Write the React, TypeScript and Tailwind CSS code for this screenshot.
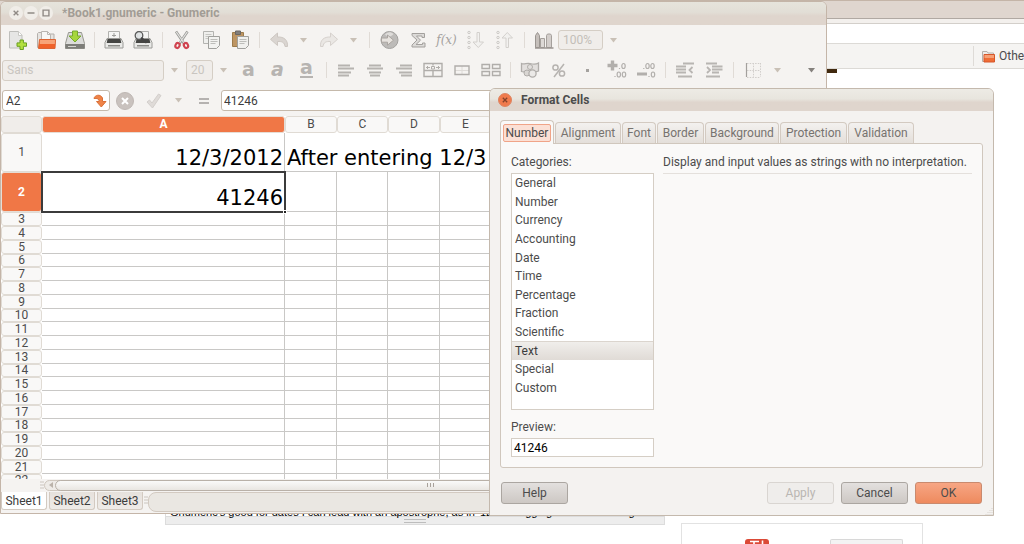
import type { ReactNode } from "react";

const toolIcon = "h-5 w-5";

function ToolButton({ label, children }: { label: string; children: ReactNode }) {
  return (
    <button type="button" aria-label={label} title={label} className="flex h-7 w-[29px] shrink-0 items-center justify-center">
      {children}
    </button>
  );
}

function Separator() {
  return (
    <div className="flex w-[10px] shrink-0 justify-center">
      <div className="h-4 w-px bg-[#e0dbd6]" />
    </div>
  );
}

function DropArrow({ label, dark = false }: { label: string; dark?: boolean }) {
  return (
    <button type="button" aria-label={label} className="flex h-7 w-[21px] shrink-0 items-center justify-center">
      <svg viewBox="0 0 7 5" className="h-[5px] w-[7px]">
        <path d="M0 0h7L3.5 4.6z" fill={dark ? "#85817d" : "#c9c0b6"} />
      </svg>
    </button>
  );
}

function NewIcon() {
  return (
    <svg viewBox="0 0 20 20" className={toolIcon}>
      <path d="M2.500 1.500h9l3.500 3.500v13H2.500z" fill="#e6e6e5" stroke="#bebebb" />
      <path d="M11.500 1.500v4H15" fill="#fff" stroke="#c9c9c5" />
      <path d="M13 10h3.400v2.900h3.100v3.400h-3.100v3.200H13v-3.200h-3v-3.400h3z" fill="#b3e03f" stroke="#6a9f22" />
    </svg>
  );
}

function FolderIcon() {
  return (
    <svg viewBox="0 0 20 20" className={toolIcon}>
      <path d="M1.500 17.500v-14l1-1H7l1 1.500h10v13.500z" fill="#e6e4e1" stroke="#b4b0ac" />
      <path d="M5.500 9V1.500h6l3 3V9" fill="#f7f7f6" stroke="#b9b6b2" />
      <path d="M11.500 1.500v3h3" fill="none" stroke="#b9b6b2" />
      <path d="M3.500 9.500h16l-.5 9H2.500z" fill="#f0622a" stroke="#dc6534" />
      <path d="M4 10h15l-.2 4H3.800z" fill="#f8a478" />
    </svg>
  );
}

function SaveIcon() {
  return (
    <svg viewBox="0 0 20 20" className={toolIcon}>
      <path d="M3.500 2.500h13l3 11v5H.500v-5z" fill="#dcdcda" stroke="#96968f" />
      <path d="M.5 14h19v4.500H.5z" fill="#7d7d79" />
      <path d="M3 16.500h8" stroke="#d5d5d0" />
      <path d="M7.500 1h5v5H16l-6 6-6-6h3.500z" fill="#a6d63c" stroke="#76aa2c" />
    </svg>
  );
}

function PrinterIcon({ preview = false }: { preview?: boolean }) {
  return (
    <svg viewBox="0 0 20 20" className={toolIcon}>
      <path d="M4.500 1.500h11V11h-11z" fill="#f5f5f4" stroke="#b1b1ae" />
      <path d="M3 8.500h14l2 4v5.500H1v-5.500z" fill="#e9e9e7" stroke="#9a9a97" />
      <path d="M3.500 9h13l.8 4H2.700z" fill="#454543" />
      <path d="M4 15h12v1.500H4z" fill="#8b8b88" />
      {preview ? (
        <>
          <circle cx="6" cy="5.500" r="3.800" fill="#dfe2e3" fillOpacity="0.9" stroke="#5b5b5b" strokeWidth="1.300" />
          <path d="M8.800 8.300l4 3.900" stroke="#444" strokeWidth="2.200" strokeLinecap="round" />
        </>
      ) : (
        <path d="M10 3v4M8 5.500h4" stroke="#9d9d9a" />
      )}
    </svg>
  );
}

function CutIcon() {
  return (
    <svg viewBox="0 0 20 20" className={toolIcon}>
      <path d="M4 1.500l8 12M15.500 1.500l-8 12" stroke="#989895" strokeWidth="2.600" />
      <path d="M4.300 2l7.700 11M15.200 2l-7.700 11" stroke="#e4e4e2" strokeWidth="1.200" />
      <ellipse cx="5.500" cy="15.500" rx="2" ry="2.600" transform="rotate(25 5.500 15.500)" fill="none" stroke="#d04450" strokeWidth="2.200" />
      <ellipse cx="14" cy="15.500" rx="2" ry="2.600" transform="rotate(-25 14 15.500)" fill="none" stroke="#d04450" strokeWidth="2.200" />
    </svg>
  );
}

function CopyIcon() {
  return (
    <svg viewBox="0 0 20 20" className={toolIcon}>
      <path d="M2.500 1.500h10v12h-10z" fill="#efefed" stroke="#b3b3b0" />
      <path d="M4.500 4.500h6M4.500 6.500h3M4.500 8.500h3" stroke="#c6c6c3" />
      <path d="M7.500 6.500h11v9l-3 3h-8z" fill="#f2f2f0" stroke="#a0a09d" />
      <path d="M9.500 9.500h7M9.500 11.500h7M9.500 13.500h5" stroke="#bdbdba" />
    </svg>
  );
}

function PasteIcon() {
  return (
    <svg viewBox="0 0 20 20" className={toolIcon}>
      <path d="M2.500 2.500h11v14h-11z" fill="#bd9563" stroke="#9c7b4b" />
      <path d="M5.500 1h5v3.500h-5z" fill="#807d7a" stroke="#6a6764" />
      <path d="M7.500 6.500h11v9l-3 3h-8z" fill="#f0f0ee" stroke="#a0a09d" />
      <path d="M9.500 9.500h7M9.500 11.500h7M9.500 13.500h5" stroke="#bdbdba" />
    </svg>
  );
}

function UndoIcon({ redo = false }: { redo?: boolean }) {
  return (
    <svg viewBox="0 0 20 20" className={toolIcon}>
      <path
        d="M8.500 3L1.500 9.300l7 6.200v-4c4.500-.3 7 .8 7.500 5h2.500c.5-6.500-3.500-9.800-10-9.500z"
        fill={redo ? "#eae7e4" : "#dad5d1"}
        stroke={redo ? "#d6d1cd" : "#cdc7c2"}
        transform={redo ? "matrix(-1 0 0 1 20 0)" : undefined}
      />
    </svg>
  );
}

function LinkIcon() {
  return (
    <svg viewBox="0 0 20 20" className={toolIcon}>
      <circle cx="10.500" cy="10" r="8.500" fill="#bdbbb9" stroke="#a3a19f" />
      <path d="M6 4.500c3-3 6-3 8.500-.5-2 2.500-5 4-8.500.5z" fill="#dedcda" />
      <path d="M2.500 8h6V5l6 5.200-6 5v-3h-6z" fill="#e7e3df" stroke="#aaa5a1" />
    </svg>
  );
}

function SumIcon() {
  return (
    <svg viewBox="0 0 20 20" className={toolIcon}>
      <path d="M4 3.500h12.500v4H14V6H8.500l4 4.200L8 14.500h6.500V13H17v4H4v-2l5-5-5-4.500z" fill="#dcdad8" stroke="#a3a09d" />
    </svg>
  );
}

function SortIcon({ up = false }: { up?: boolean }) {
  return (
    <svg viewBox="0 0 20 20" className={toolIcon} fill="none" stroke="#cbc8c5">
      <circle cx="3" cy="2.500" r="1.200" />
      <circle cx="3" cy="7.500" r="1.200" />
      <circle cx="3" cy="12.500" r="1.200" />
      <circle cx="3" cy="17.500" r="1.200" />
      <path
        d="M11 2.500h2.500v9.500h4L12.300 17.500 7 12h4z"
        fill="#f2f1ef"
        stroke="#d3d0cd"
        transform={up ? "matrix(1 0 0 -1 0 20)" : undefined}
      />
    </svg>
  );
}

function ChartIcon() {
  return (
    <svg viewBox="0 0 20 20" className={toolIcon}>
      <path d="M1.500 5.500l2-3 2 3v12h-4z" fill="#c5bfbb" stroke="#9a9591" />
      <path d="M6.500 8.500h4v9h-4z" fill="#ddd9d6" stroke="#a5a09c" />
      <path d="M12.500 5.500l1-1.500h3l1 1.500v12h-5z" fill="#d3cecb" stroke="#a5a09c" />
      <path d="M1 18h18.500" stroke="#9a9591" strokeWidth="1.600" />
    </svg>
  );
}

function LetterIcon({ kind }: { kind: "bold" | "italic" | "underline" }) {
  const style = {
    bold: "font-bold",
    italic: "font-bold italic",
    underline: "font-bold border-b-2 border-[#b7b4b1]",
  }[kind];
  return <span className={`flex h-4 items-end font-[DejaVu_Sans,sans-serif] text-[19px] leading-[17px] text-[#b7b4b1] ${style}`}>a</span>;
}

function AlignIcon({ align }: { align: "left" | "center" | "right" }) {
  const d = {
    left: "M2 5.500h12M2 8.500h16M2 12.500h13M2 15.500h11",
    center: "M4 5.500h12M2 8.500h16M4 12.500h12M5 15.500h10",
    right: "M6 5.500h12M2 8.500h16M5 12.500h13M7 15.500h11",
  }[align];
  return (
    <svg viewBox="0 0 20 20" className={toolIcon}>
      <path d={d} stroke="#b6b3b0" strokeWidth="2" />
    </svg>
  );
}

function CenterAcrossIcon() {
  return (
    <svg viewBox="0 0 20 20" className={toolIcon} fill="none" stroke="#b0adaa">
      <path d="M1 3.500h18v13H1zM1 10.500h18M10 10.500v6M10 3.500v2" strokeWidth="1.400" />
      <path d="M3 7.500h4M13 7.500h4M4.500 6v3M15.500 6v3M8.500 6.500h3v2.500h-3z" />
    </svg>
  );
}

function MergeIcon() {
  return (
    <svg viewBox="0 0 20 20" className={toolIcon} fill="none">
      <path d="M10 6v9M3 10.500h14" stroke="#dedbd8" />
      <path d="M3 6h14v8.500H3z" stroke="#b0adaa" strokeWidth="1.400" />
    </svg>
  );
}

function SplitIcon() {
  return (
    <svg viewBox="0 0 20 20" className={toolIcon} fill="none" stroke="#b0adaa" strokeWidth="1.400">
      <path d="M1 4.500h7.500v4H1zM11.500 4.500H19v4h-7.500zM1 11.500h7.500v4H1zM11.500 11.500H19v4h-7.500z" />
    </svg>
  );
}

function MoneyIcon() {
  return (
    <svg viewBox="0 0 20 20" className={toolIcon} stroke="#b0adaa">
      <path d="M1.500 3.500c3 1.500 5-1 8.500 0s6 1 8.500-.5v8c-3 1.500-5.500 1-8.500.5s-6 1-8.500 0z" fill="#e2dfdd" strokeWidth="1.300" />
      <circle cx="10" cy="7" r="2.500" fill="none" />
      <circle cx="7" cy="13" r="3" fill="#d9d6d3" />
      <circle cx="12.500" cy="13.500" r="3.600" fill="#ebe9e7" strokeWidth="1.300" />
    </svg>
  );
}

function PercentIcon() {
  return (
    <svg viewBox="0 0 20 20" className={toolIcon} fill="none" stroke="#b6b3b0" strokeWidth="1.500">
      <circle cx="6.500" cy="7.500" r="2.600" />
      <circle cx="13" cy="13.500" r="2.600" />
      <path d="M15 4L5 17" />
    </svg>
  );
}

function DecimalIcon({ add = false }: { add?: boolean }) {
  return (
    <svg viewBox="0 0 20 20" className={toolIcon} fill="none" stroke="#b2afac" strokeWidth="1.200">
      {add ? (
        <path d="M.5 5.500h10M5.500 .5v10" strokeWidth="3.400" />
      ) : (
        <path d="M1 14h10" strokeWidth="3" />
      )}
      <ellipse cx="16.500" cy="6" rx="1.700" ry="2.500" />
      {add ? <path d="M12.500 8v1" /> : <ellipse cx="11.500" cy="6" rx="1.700" ry="2.500" />}
      {!add && <path d="M7.800 8v1M13 16v1" />}
      <ellipse cx="17" cy="14.500" rx="1.700" ry="2.500" />
      {add && <ellipse cx="11.800" cy="14.500" rx="1.700" ry="2.500" />}
      {add && <path d="M8 16v1" />}
    </svg>
  );
}

function IndentIcon({ more = false }: { more?: boolean }) {
  return (
    <svg viewBox="0 0 20 20" className={toolIcon} fill="none" stroke="#b8b5b2" strokeWidth="1.800">
      {more ? (
        <path d="M2 3.500h11M8 6.500h10.500M8 9.500h10.500M8 12.500h7M2 16.500h14M3 7l3 3-3 3" />
      ) : (
        <path d="M8 3.500h11M1 6.500h10M1 9.500h10M1 12.500h10M3 16.500h14M17.500 7l-3 3 3 3" />
      )}
    </svg>
  );
}

function BordersIcon() {
  return (
    <svg viewBox="0 0 20 20" className={toolIcon} fill="none" stroke="#d0cdca">
      <path d="M3.500 3v14" stroke="#a3a09d" strokeWidth="1.200" />
      <path d="M4 3.500h13.500M4 10.500h13.500M4 17.500h13.500M10.500 3v14M17.500 3v14" strokeDasharray="1.500 1.200" />
    </svg>
  );
}

function FormulaIcon() {
  return <span className="font-[DejaVu_Serif,serif] text-[12px] italic leading-4 text-[#a5a29f]">f(x)</span>;
}

function GotoIcon() {
  return (
    <svg viewBox="0 0 14 14" className="h-[14px] w-[14px]">
      <path d="M1 4.500C1.500 1 7.500-.5 9.500 4v3.500H13L8.300 13 3.500 7.500h2.800C6.300 5 4 4 1 4.500z" fill="#ef8347" stroke="#d97039" />
    </svg>
  );
}

const boxed = "rounded-[3px] border px-1 text-[12px] leading-4";

function Toolbars() {
  return (
    <>
      <div role="toolbar" aria-label="Standard" className="flex h-[30px] items-center pl-px">
        <ToolButton label="New"><NewIcon /></ToolButton>
        <ToolButton label="Open"><FolderIcon /></ToolButton>
        <ToolButton label="Save"><SaveIcon /></ToolButton>
        <Separator />
        <ToolButton label="Print"><PrinterIcon /></ToolButton>
        <ToolButton label="Print preview"><PrinterIcon preview /></ToolButton>
        <Separator />
        <ToolButton label="Cut"><CutIcon /></ToolButton>
        <ToolButton label="Copy"><CopyIcon /></ToolButton>
        <ToolButton label="Paste"><PasteIcon /></ToolButton>
        <Separator />
        <ToolButton label="Undo"><UndoIcon /></ToolButton>
        <DropArrow label="Undo history" />
        <ToolButton label="Redo"><UndoIcon redo /></ToolButton>
        <DropArrow label="Redo history" />
        <Separator />
        <ToolButton label="Hyperlink"><LinkIcon /></ToolButton>
        <ToolButton label="Sum"><SumIcon /></ToolButton>
        <ToolButton label="Function"><FormulaIcon /></ToolButton>
        <ToolButton label="Sort ascending"><SortIcon /></ToolButton>
        <ToolButton label="Sort descending"><SortIcon up /></ToolButton>
        <Separator />
        <ToolButton label="Chart"><ChartIcon /></ToolButton>
        <input aria-label="Zoom" disabled defaultValue="100%" className={`h-5 w-[45px] border-[#d5cec5] bg-[#f0edea] text-[#c3beb8] ${boxed}`} />
        <DropArrow label="Zoom levels" />
      </div>
      <div role="toolbar" aria-label="Format" className="flex h-[30px] items-center pl-px">
        <input aria-label="Font" disabled defaultValue="Sans" className={`h-[21px] w-[162px] border-[#d5cec5] bg-[#f0edea] text-[#c9c5c0] ${boxed}`} />
        <DropArrow label="Fonts" />
        <input aria-label="Font size" disabled defaultValue="20" className={`ml-px h-[21px] w-[27px] border-[#d5cec5] bg-[#f0edea] text-[#c9c5c0] ${boxed}`} />
        <DropArrow label="Font sizes" />
        <ToolButton label="Bold"><LetterIcon kind="bold" /></ToolButton>
        <ToolButton label="Italic"><LetterIcon kind="italic" /></ToolButton>
        <ToolButton label="Underline"><LetterIcon kind="underline" /></ToolButton>
        <Separator />
        <ToolButton label="Align left"><AlignIcon align="left" /></ToolButton>
        <ToolButton label="Align center"><AlignIcon align="center" /></ToolButton>
        <ToolButton label="Align right"><AlignIcon align="right" /></ToolButton>
        <ToolButton label="Center across"><CenterAcrossIcon /></ToolButton>
        <ToolButton label="Merge"><MergeIcon /></ToolButton>
        <ToolButton label="Split"><SplitIcon /></ToolButton>
        <Separator />
        <ToolButton label="Currency format"><MoneyIcon /></ToolButton>
        <ToolButton label="Percent format"><PercentIcon /></ToolButton>
        <ToolButton label="Thousands separator"><span className="h-[3px] w-[3px] bg-[#a5a29f]" /></ToolButton>
        <ToolButton label="Increase precision"><DecimalIcon add /></ToolButton>
        <ToolButton label="Decrease precision"><DecimalIcon /></ToolButton>
        <Separator />
        <ToolButton label="Decrease indent"><IndentIcon /></ToolButton>
        <ToolButton label="Increase indent"><IndentIcon more /></ToolButton>
        <Separator />
        <ToolButton label="Borders"><BordersIcon /></ToolButton>
        <DropArrow label="Border styles" />
        <div className="ml-auto pr-1"><DropArrow label="More tools" dark /></div>
      </div>
      <div className="flex h-[31px] items-center pl-px">
        <div className="flex h-[21px] w-[108px] items-center rounded-[3px] border border-[#c5b9ab] bg-white pr-[2px]">
          <input aria-label="Cell" defaultValue="A2" className="w-full min-w-0 bg-transparent px-[3px] text-[12px] leading-4 text-[#3c3c3c]" />
          <button type="button" aria-label="Go to"><GotoIcon /></button>
        </div>
        <ToolButton label="Cancel edit">
          <svg viewBox="0 0 18 18" className="h-[18px] w-[18px]">
            <circle cx="9" cy="9" r="8.500" fill="#c9c2be" stroke="#beb7b3" />
            <path d="M6 6l6 6M12 6l-6 6" stroke="#fff" strokeWidth="2" />
          </svg>
        </ToolButton>
        <ToolButton label="Accept edit">
          <svg viewBox="0 0 18 18" className="h-[18px] w-[18px]">
            <path d="M2 10l2.500-2 2.500 3L13.500 2 16 3.500 7.500 16z" fill="#dfdbd8" stroke="#d3cfcc" />
          </svg>
        </ToolButton>
        <DropArrow label="Accept options" />
        <ToolButton label="Enter formula">
          <svg viewBox="0 0 10 6" className="h-[6px] w-[10px]"><path d="M0 1h10M0 5h10" stroke="#a09d9a" strokeWidth="1.600" /></svg>
        </ToolButton>
        <input aria-label="Formula" defaultValue="41246" className="ml-[3px] h-[21px] min-w-0 flex-1 rounded-[3px] border border-[#c5b9ab] bg-white px-[2px] text-[12px] leading-4 text-[#3c3c3c]" />
      </div>
    </>
  );
}

const columns = ["A", "B", "C", "D", "E"];
const smallRows = Array.from({ length: 20 }, (_, i) => i + 3);
const cell = "border-b border-r border-[#c9c8c6] p-0";
const headBase = "rounded-[3px] border p-0 text-center font-[Roboto,sans-serif] text-[12px] leading-[11px]";
const head = `${headBase} border-[#e0dbd4] bg-[#f9f8f7] font-normal text-[#4c4c4c]`;
const activeHead = `${headBase} border-[#e6ddd5] bg-[#f07746] font-bold text-white`;

function Sheet() {
  return (
    <div className="h-[363px] overflow-hidden bg-white">
      <table className="w-full table-fixed border-separate border-spacing-0">
        <colgroup>
          <col className="w-[41px]" />
          <col className="w-[243px]" />
          <col className="w-[52px]" />
          <col className="w-[51px]" />
          <col className="w-[52px]" />
          <col className="w-[51px]" />
          <col />
        </colgroup>
        <thead>
          <tr className="h-[17px]">
            <th className="rounded-[3px] border border-[#e0dbd4] bg-[#f0edea] p-0" aria-label="Select all" />
            {columns.map((c) => (
              <th key={c} scope="col" className={c === "A" ? activeHead : head}>{c}</th>
            ))}
            <th className={head} aria-hidden="true" />
          </tr>
        </thead>
        <tbody className="font-[DejaVu_Sans,sans-serif] text-[21px] leading-[25px] text-black">
          <tr className="h-[39px]">
            <th scope="row" className={head}>1</th>
            <td className={`${cell} pr-px text-right align-bottom`}>12/3/2012</td>
            <td className="whitespace-nowrap border-b border-[#c9c8c6] p-0 pl-[2px] align-bottom">After entering 12/3</td>
            {columns.slice(1).map((c) => <td key={c} className="border-b border-[#c9c8c6] p-0" />)}
          </tr>
          <tr className="h-[40px]">
            <th scope="row" className={activeHead}>2</th>
            <td className="relative p-0 pb-px pr-[2px] text-right align-bottom outline-2 -outline-offset-1 outline-[#3b3b3b]">
              41246
              <span className="absolute -bottom-[2px] -right-[2px] h-1 w-1 border border-white bg-[#222]" />
            </td>
            {columns.map((c) => <td key={c} className={cell} />)}
          </tr>
          {smallRows.map((n) => (
            <tr key={n} className={n % 4 === 2 ? "h-[13px]" : "h-[14px]"}>
              <th scope="row" className={head}>{n}</th>
              {[...columns, "rest"].map((c) => <td key={c} className={cell} />)}
            </tr>
          ))}
        </tbody>
      </table>
    </div>
  );
}

function Grip() {
  return (
    <svg viewBox="0 0 4 8" className="h-2 w-1 shrink-0"><path d="M0 1h4M0 4h4M0 7h4" stroke="#cbc5be" /></svg>
  );
}

function SpreadsheetWindow() {
  return (
    <section aria-label="Gnumeric" className="absolute left-0 top-px w-[827px] overflow-hidden rounded-t-md border border-[#c4b5a8] bg-[#f5f3f1]">
      <header className="flex h-[23px] items-center bg-linear-to-b from-[#e6e4dc] via-[#e2ded6] via-45% to-[#dfd5cd] to-60% pb-[2px] pl-[8px]">
        <div className="flex gap-[1px]">
          {["M4 4l4 4M8 4l-4 4", "M3 6h6", "M3.500 3.500h5v5h-5z"].map((d, i) => (
            <button key={d} type="button" aria-label={["Close", "Minimize", "Maximize"][i]} className="h-[14px] w-[14px] rounded-full bg-[#f0ede8]">
              <svg viewBox="0 0 12 12" className="h-[14px] w-[14px]"><path d={d} fill="none" stroke="#908b86" strokeWidth="1.200" /></svg>
            </button>
          ))}
        </div>
        <h1 className="ml-[9px] text-[12px] font-bold leading-4 text-[#a29c95]">*Book1.gnumeric - Gnumeric</h1>
      </header>
      <Toolbars />
      <Sheet />
      <div className="flex h-[12px] items-center pl-[39px]">
        <Grip />
        <div className="flex h-[11px] flex-1 items-center rounded-full border border-[#cfc7be] bg-[#eeebe7] pl-1">
          <svg viewBox="0 0 4 6" className="h-[6px] w-1"><path d="M4 0v6L0 3z" fill="#bbb3aa" /></svg>
          <div className="ml-[2px] flex h-[11px] w-[750px] items-center justify-center rounded-full border border-[#b9b1a8] bg-linear-to-b from-[#fafaf9] to-[#e9e6e2]">
            <svg viewBox="0 0 7 4" className="h-1 w-[7px]"><path d="M.5 0v4M3.500 0v4M6.500 0v4" stroke="#a8a19a" /></svg>
          </div>
        </div>
      </div>
      <div className="flex h-[22px] items-start pt-px">
        <div role="tablist" aria-label="Sheets" className="flex gap-[2px] text-[12px] leading-4 text-[#3c3c3c]">
          {["Sheet1", "Sheet2", "Sheet3"].map((s, i) => (
            <button key={s} type="button" role="tab" aria-selected={i === 0} className={`h-[18px] w-[46px] rounded-b-[3px] border border-t-0 border-[#d3cac1] ${i === 0 ? "bg-white" : "bg-linear-to-b from-[#e6e1dc] to-[#efebe8]"}`}>{s}</button>
          ))}
        </div>
        <div className="ml-px mt-1"><Grip /></div>
        <div className="h-5 flex-1 rounded-l-[8px] border border-[#d3cac1] bg-[#eae7e2]" />
      </div>
    </section>
  );
}

const tabs = [
  { name: "Number", width: "w-[54px]" },
  { name: "Alignment", width: "w-[66px]" },
  { name: "Font", width: "w-[34px]" },
  { name: "Border", width: "w-[47px]" },
  { name: "Background", width: "w-[74px]" },
  { name: "Protection", width: "w-[67px]" },
  { name: "Validation", width: "w-[66px]" },
];

const categories = ["General", "Number", "Currency", "Accounting", "Date", "Time", "Percentage", "Fraction", "Scientific", "Text", "Special", "Custom"];

const button = "h-[22px] w-[67px] rounded-[3px] border text-[12px] leading-4";
const greyButton = "border-[#aba6a1] bg-linear-to-b from-[#e3e0de] to-[#cdc8c4] text-[#4c4c4c]";

function FormatDialog() {
  return (
    <section role="dialog" aria-label="Format Cells" className="absolute left-[489px] top-[88px] w-[505px] rounded-t-md border border-[#c4b9ad] bg-[#f4f2f0] text-[12px] leading-4 text-[#4c4c4c]">
      <header className="flex h-[22px] items-center rounded-t-[5px] bg-linear-to-b from-[#edebe5] via-[#e8e5de] via-45% to-[#dfd5cd] to-60% pl-2">
        <button type="button" aria-label="Close" className="h-[14px] w-[14px]">
          <svg viewBox="0 0 14 14" className="h-[14px] w-[14px]">
            <circle cx="7" cy="7" r="6.500" fill="#f07a4c" stroke="#dc8562" />
            <path d="M4.800 4.800l4.400 4.400M9.200 4.800l-4.400 4.400" stroke="#84422a" strokeWidth="1.300" />
          </svg>
        </button>
        <h2 className="ml-[9px] text-[12px] font-bold">Format Cells</h2>
      </header>
      <div className="px-[10px] pb-[11px] pt-[9px]">
        <div role="tablist" aria-label="Format" className="flex items-end gap-px">
          {tabs.map(({ name, width }, i) =>
            i === 0 ? (
              <button key={name} type="button" role="tab" aria-selected className={`relative -mb-px h-[24px] rounded-t-[4px] border border-b-0 border-[#d0c7bd] bg-[#faf9f8] p-[2px] ${width}`}>
                <span className="flex h-[18px] items-center justify-center rounded-[2px] border border-[#f0a488] bg-[#fbe0d5]">{name}</span>
              </button>
            ) : (
              <button key={name} type="button" role="tab" aria-selected={false} className={`h-[21px] rounded-t-[4px] border border-b-0 border-[#d3cac1] bg-linear-to-b from-[#f3f1ef] to-[#e4dfda] text-[#77736f] ${width}`}>{name}</button>
            ),
          )}
        </div>
        <div role="tabpanel" aria-label="Number" className="flex h-[325px] gap-[9px] rounded-b-[3px] rounded-tr-[3px] border border-[#d0c7bd] bg-[#faf9f8] p-[10px]">
          <div className="flex w-[143px] flex-col">
            <span id="categories">Categories:</span>
            <div className="mt-[3px] h-[238px] border border-[#d5cec5] bg-white">
              <ul role="listbox" aria-labelledby="categories" className="grid h-[223px] grid-rows-12">
                {categories.map((c) => (
                  <li key={c} role="option" aria-selected={c === "Text"} className={`flex items-center px-[3px] ${c === "Text" ? "border-t border-[#dbd5ce] bg-linear-to-b from-[#f0eeeb] to-[#e0dbd6] text-[#3c3c3c]" : ""}`}>{c}</li>
                ))}
              </ul>
            </div>
            <label htmlFor="preview" className="mt-[9px]">Preview:</label>
            <input id="preview" readOnly defaultValue="41246" className="mt-[3px] h-[19px] border border-[#d5cec5] bg-white px-[2px] text-black" />
          </div>
          <p className="h-5 min-w-0 flex-1 whitespace-nowrap border-b border-[#e4e0dc]">Display and input values as strings with no interpretation.</p>
        </div>
        <div className="mt-[14px] flex gap-[7px] px-px">
          <button type="button" className={`mr-auto ${button} ${greyButton}`}>Help</button>
          <button type="button" disabled className={`border-[#d9d5d1] bg-[#efedeb] text-[#bab6b2] ${button}`}>Apply</button>
          <button type="button" className={`${button} ${greyButton}`}>Cancel</button>
          <button type="button" className={`border-[#c98a6e] bg-linear-to-b from-[#f7a684] to-[#ee8a5e] text-[#4c4c4c] ${button}`}>OK</button>
        </div>
      </div>
      <svg viewBox="0 0 8 8" className="absolute bottom-0 right-0 h-2 w-2"><path d="M7 1v7M5 3v5M3 5v3M1 7v1" stroke="#d8d3cd" strokeDasharray="1 1" /></svg>
    </section>
  );
}

function Browser() {
  return (
    <div className="flex h-full flex-col bg-white">
      <div className="h-[18px] border-t border-[#c4b5a8] bg-[#dfd6cf]" />
      <div className="h-[6px] border-b border-t border-[#b0a9a3] border-b-[#d3cfca] bg-[#f3f0ed]" />
      <div className="h-[19px]" />
      <nav aria-label="Bookmarks" className="flex h-[26px] shrink-0 items-center border-y border-[#dcdad6] bg-[#f5f4f2] pl-[973px]">
        <div className="h-5 border-l border-[#dedbd7]" />
        <a href="#other" className="ml-2 flex items-center gap-1 whitespace-nowrap text-[12px] leading-4 text-[#4c4c4c]">
          <svg viewBox="0 0 13 13" className="h-[13px] w-[13px]">
            <path d="M.5 11.500v-10H5l1 1.500h5.500v8z" fill="#eeece9" stroke="#b5b0ab" />
            <path d="M2 4.500h10.500v7.500H2z" fill="#ef6d36" stroke="#d6572a" />
            <path d="M2.500 5h9.500v3h-9.500z" fill="#f6a076" />
          </svg>
          Other Bookmarks
        </a>
      </nav>
      <div className="ml-[827px] h-1 w-[10px] bg-[#40290f]" />
      <main className="mt-auto flex items-start pl-[165px]">
        <div className="w-[500px] border border-[#dcdcdc]">
          <p className="whitespace-nowrap px-1 pt-1 font-[Liberation_Sans,sans-serif] text-[11px] leading-2 text-black">
            Gnumeric's good for dates I can lead with an apostrophe, as in '12/3. Dragging the corner along
          </p>
          <div className="flex h-2 items-center justify-center border-t border-[#dcdcdc] bg-[#ededed]">
            <div className="h-1 w-[22px] border-y border-[#bdbdbd]" />
          </div>
        </div>
        <div className="ml-4 mt-[20px] flex h-[21px] w-[242px] items-start overflow-hidden border border-b-0 border-[#e2e2e2] pl-[63px] pt-[15px]">
          <svg viewBox="0 0 24 5" className="h-[5px] w-6">
            <path d="M0 5V3q0-3 3-3h18q3 0 3 3v2z" fill="#db4a37" />
            <path d="M5 2.500h9M9 2v3M17.500 1.500v3.500" stroke="#fff" strokeWidth="1.600" />
          </svg>
          <div className="ml-[61px] h-[6px] w-[73px] rounded-t-[2px] border border-b-0 border-[#d8d8d8] bg-[#f3f3f3]" />
        </div>
      </main>
    </div>
  );
}

export default function App() {
  return (
    <div className="relative h-screen w-full overflow-hidden font-[Roboto,Noto_Sans,sans-serif]">
      <Browser />
      <SpreadsheetWindow />
      <FormatDialog />
    </div>
  );
}
